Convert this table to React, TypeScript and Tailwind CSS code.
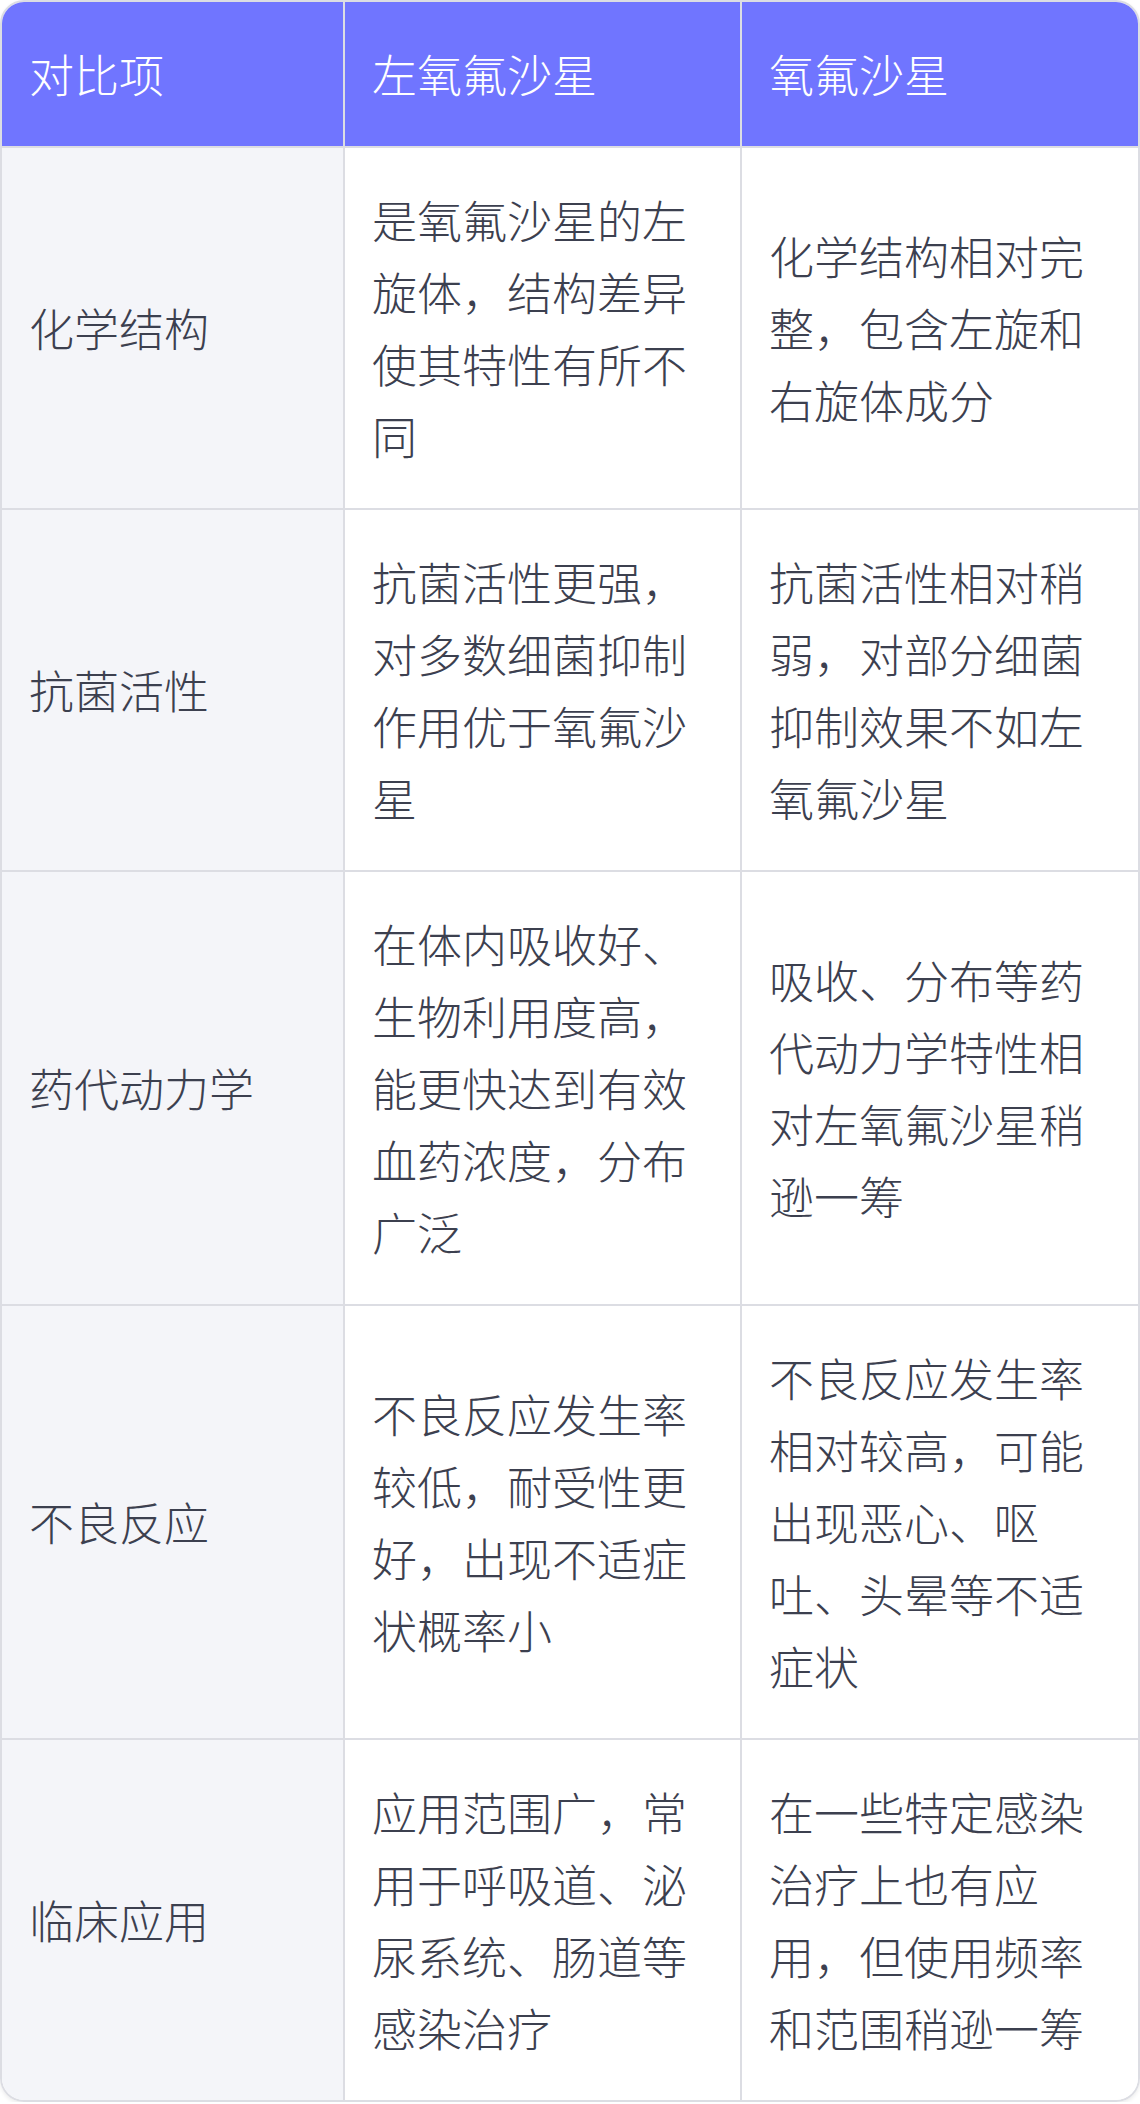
const header = ["对比项", "左氧氟沙星", "氧氟沙星"];

const rows: string[][] = [
  [
    "化学结构",
    "是氧氟沙星的左旋体，结构差异使其特性有所不同",
    "化学结构相对完整，包含左旋和右旋体成分",
  ],
  [
    "抗菌活性",
    "抗菌活性更强，对多数细菌抑制作用优于氧氟沙星",
    "抗菌活性相对稍弱，对部分细菌抑制效果不如左氧氟沙星",
  ],
  [
    "药代动力学",
    "在体内吸收好、生物利用度高，能更快达到有效血药浓度，分布广泛",
    "吸收、分布等药代动力学特性相对左氧氟沙星稍逊一筹",
  ],
  [
    "不良反应",
    "不良反应发生率较低，耐受性更好，出现不适症状概率小",
    "不良反应发生率相对较高，可能出现恶心、呕吐、头晕等不适症状",
  ],
  [
    "临床应用",
    "应用范围广，常用于呼吸道、泌尿系统、肠道等感染治疗",
    "在一些特定感染治疗上也有应用，但使用频率和范围稍逊一筹",
  ],
];

const cell = "flex items-center px-[27px] py-[36px] text-[45px] leading-[72px]";

export default function App() {
  return (
    <div
      className="w-[1140px] bg-white"
      style={{ fontFamily: '"Noto Sans CJK SC", "Noto Sans", sans-serif' }}
    >
      <div className="overflow-hidden rounded-[24px] border-2 border-[#dcdde3] shadow-[0_2px_4px_rgba(0,0,0,0.08)]">
        {/* Header row */}
        <div className="grid grid-cols-[341px_397px_398px] bg-[#7075ff] font-light text-white">
          {header.map((h, i) => (
            <div
              key={h}
              className={`${cell} ${i > 0 ? "border-l-2 border-[#dcdde3]" : ""}`}
            >
              {h}
            </div>
          ))}
        </div>

        {rows.map((row) => (
          <div
            key={row[0]}
            className="grid grid-cols-[341px_397px_398px] border-t-2 border-[#dcdde3] font-light text-[#3c404f]"
          >
            <div className={`${cell} bg-[#f4f5f9]`}>{row[0]}</div>
            <div className={`${cell} border-l-2 border-[#dcdde3] bg-white`}>{row[1]}</div>
            <div className={`${cell} border-l-2 border-[#dcdde3] bg-white`}>{row[2]}</div>
          </div>
        ))}
      </div>
    </div>
  );
}
